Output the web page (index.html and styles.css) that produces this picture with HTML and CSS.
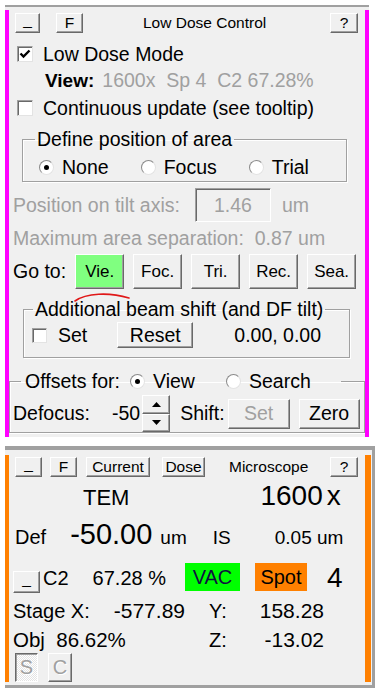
FILE: index.html
```html
<!DOCTYPE html>
<html lang="en">
<head>
    <meta charset="UTF-8">
    <title>Low Dose Control</title>
    <link rel="stylesheet" href="styles.css">
</head>
<body>
    <div class="dlg dlg-low">
        <div class="dlg-in">
            <div class="titlebar">
                <button class="btn tb-min">_</button>
                <button class="btn tb-f">F</button>
                <span class="tb-title">Low Dose Control</span>
                <button class="btn tb-help">?</button>
            </div>

            <div class="row row-mode">
                <span class="check"><svg width="14" height="14" viewBox="0 0 14 14"><path d="M2.5 6.5 L5.5 9.5 L11.5 3.5" fill="none" stroke="#000" stroke-width="2.4"/></svg></span>
                <span class="lbl">Low Dose Mode</span>
            </div>
            <div class="row row-view">
                <b class="view-lbl">View:</b>
                <span class="dim view-info">1600x&nbsp; Sp 4&nbsp; C2 67.28%</span>
            </div>
            <div class="row row-cont">
                <span class="check"></span>
                <span class="lbl">Continuous update (see tooltip)</span>
            </div>

            <fieldset class="grp grp-def">
                <legend>Define position of area</legend>
                <div class="row radios">
                    <span class="opt"><span class="radio on"></span>None</span>
                    <span class="opt"><span class="radio"></span>Focus</span>
                    <span class="opt"><span class="radio"></span>Trial</span>
                </div>
            </fieldset>

            <div class="row row-tilt dim">
                <span>Position on tilt axis:</span>
                <span class="edit">1.46</span>
                <span class="unit">um</span>
            </div>
            <div class="row row-sep dim">Maximum area separation:&nbsp; 0.87 um</div>

            <div class="row row-goto">
                <span>Go to:</span>
                <button class="btn go go-view">Vie.</button>
                <button class="btn go">Foc.</button>
                <button class="btn go">Tri.</button>
                <button class="btn go">Rec.</button>
                <button class="btn go">Sea.</button>
                <svg class="scribble" width="60" height="14" viewBox="0 0 60 14"><path d="M1 10 C 12 2, 35 1, 55 7" fill="none" stroke="#e01818" stroke-width="1.6" stroke-linecap="round"/></svg>
            </div>

            <fieldset class="grp grp-shift">
                <legend>Additional beam shift (and DF tilt)</legend>
                <div class="row shift-row">
                    <span class="check small"></span>
                    <span class="set-lbl">Set</span>
                    <button class="btn reset">Reset</button>
                    <span class="shift-val">0.00, 0.00</span>
                </div>
            </fieldset>

            <fieldset class="grp grp-off">
                <legend>
                    <span>Offsets for:</span>
                    <span class="opt opt-view"><span class="radio on"></span>View</span>
                    <span class="opt opt-search"><span class="radio"></span>Search</span>
                </legend>
                <div class="row defocus-row">
                    <span>Defocus:</span>
                    <span class="defocus-val">-50</span>
                    <span class="spin">
                        <span class="spin-btn"><svg width="9" height="5" viewBox="0 0 9 5"><path d="M0 5 L4.5 0 L9 5z"/></svg></span>
                        <span class="spin-btn"><svg width="9" height="5" viewBox="0 0 9 5"><path d="M0 0 L4.5 5 L9 0z"/></svg></span>
                    </span>
                    <span class="shift-lbl">Shift:</span>
                    <button class="btn off-set" disabled>Set</button>
                    <button class="btn off-zero">Zero</button>
                </div>
            </fieldset>
        </div>
    </div>

    <div class="dlg dlg-mic">
        <div class="dlg-in">
            <div class="titlebar">
                <button class="btn tb-min">_</button>
                <button class="btn tb-f2">F</button>
                <button class="btn tb-current">Current</button>
                <button class="btn tb-dose">Dose</button>
                <span class="tb-title2">Microscope</span>
                <button class="btn tb-help">?</button>
            </div>

            <div class="row mag-row">
                <span class="mode">TEM</span>
                <span class="mag">1600</span><span class="mag-x">x</span>
            </div>
            <div class="row def-row">
                <span class="def-lbl">Def</span>
                <span class="def-val">-50.00</span>
                <span class="def-unit">um</span>
                <span class="is-lbl">IS</span>
                <span class="is-val">0.05 um</span>
            </div>
            <div class="row c2-row">
                <button class="btn c2-min">_</button>
                <span class="c2-lbl">C2</span>
                <span class="c2-val">67.28 %</span>
                <span class="tag vac">VAC</span>
                <span class="tag spot">Spot</span>
                <span class="spot-val">4</span>
            </div>
            <div class="row stage-row">
                <span class="col-a">Stage X:</span>
                <span class="col-b">-577.89</span>
                <span class="col-c">Y:</span>
                <span class="col-d">158.28</span>
            </div>
            <div class="row stage-row obj-row">
                <span class="col-a">Obj&nbsp; 86.62%</span>
                <span class="col-b"></span>
                <span class="col-c">Z:</span>
                <span class="col-d">-13.02</span>
            </div>
            <div class="row sc-row">
                <span class="tog tog-on">S</span>
                <span class="tog">C</span>
            </div>
        </div>
    </div>
</body>
</html>
```

FILE: styles.css
```css
body {
    margin: 0;
    background: #fff;
    font-family: "Liberation Sans", Arial, sans-serif;
    font-size: 19.5px;
    color: #000;
}
.dlg {
    background: #f0f0f0;
    box-sizing: border-box;
}
.dlg-low {
    margin: 5px 0 0 5px;
    width: 364px;
    border-top: 2px solid #a0a0a0;
    padding-top: 3px;
}
.dlg-low .dlg-in {
    height: 427px;
    border-left: 4px solid #ff00ff;
    border-right: 4px solid #ff00ff;
    overflow: hidden;
}
.dlg-mic {
    margin: 9px 0 0 5px;
    width: 370px;
    border-top: 4px solid #a0a0a0;
    border-right: 3px solid #a0a0a0;
    border-bottom: 3px solid #a0a0a0;
    padding: 5px 1px 3px 0;
}
.dlg-mic .dlg-in {
    height: 227px;
    border-left: 4px solid #ff8000;
    border-right: 6px solid #ff8000;
    overflow: hidden;
}
.row {
    display: flex;
    align-items: center;
}
.dim {
    color: #a0a0a0;
}

/* buttons */
.btn {
    font-family: inherit;
    font-size: 15.5px;
    color: #000;
    background: #f0f0f0;
    border: 1px solid;
    border-color: #fff #696969 #696969 #fff;
    box-shadow: inset -1px -1px #a0a0a0;
    box-sizing: border-box;
    padding: 0;
    display: flex;
    align-items: center;
    justify-content: center;
}
.btn:disabled {
    color: #a0a0a0;
}

.titlebar {
    display: flex;
    align-items: center;
    height: 20px;
    font-size: 15.5px;
}
.titlebar .btn {
    height: 20px;
}
.dlg-low .titlebar {
    margin-top: 3px;
}
.dlg-mic .titlebar {
    margin-top: 2px;
}
.tb-min {
    width: 25px;
    margin-left: 6px;
    padding-bottom: 7px !important;
}
.tb-f {
    width: 27px;
    margin-left: 16px;
}
.tb-title {
    margin-left: 60px;
}
.tb-help {
    width: 28px;
    margin-left: auto;
    margin-right: 7px;
}
.dlg-mic .tb-min {
    width: 27px;
}
.tb-f2 {
    width: 27px;
    margin-left: 8px;
}
.tb-current {
    width: 64px;
    margin-left: 9px;
}
.tb-dose {
    width: 43px;
    margin-left: 12px;
}
.tb-title2 {
    margin-left: 24px;
}

/* check boxes and radios */
.check {
    width: 16px;
    height: 16px;
    box-sizing: border-box;
    background: #fff;
    border: 1px solid;
    border-color: #a0a0a0 #e3e3e3 #e3e3e3 #a0a0a0;
    box-shadow: inset 1px 1px #696969;
    display: flex;
    align-items: center;
    justify-content: center;
    flex-shrink: 0;
}
.check svg {
    display: block;
}
.radio {
    width: 15px;
    height: 15px;
    box-sizing: border-box;
    border-radius: 50%;
    background: #fff;
    border: 1px solid;
    border-color: #8a8a8a #e3e3e3 #e3e3e3 #8a8a8a;
    display: inline-flex;
    align-items: center;
    justify-content: center;
    margin-right: 8px;
    flex-shrink: 0;
}
.radio.on::after {
    content: "";
    width: 5px;
    height: 5px;
    border-radius: 50%;
    background: #000;
}
.opt {
    display: inline-flex;
    align-items: center;
}

.row-mode {
    height: 26px;
    margin-top: 8px;
}
.row-mode .check,
.row-cont .check {
    margin-left: 8px;
}
.lbl {
    margin-left: 10px;
}
.row-view {
    height: 27px;
    padding-left: 36px;
}
.view-lbl {
    font-size: 19px;
}
.view-info {
    margin-left: 8px;
}
.row-cont {
    height: 28px;
}

/* group boxes */
.grp {
    margin: 0;
    padding: 0;
    min-width: 0;
    box-sizing: border-box;
    border: 1px solid #a0a0a0;
    box-shadow: inset 1px 1px #fff, 1px 1px #fff;
}
.grp legend {
    padding: 0 2px;
    line-height: 22px;
}
.grp-def {
    margin: 6px 0 0 13px;
    width: 325px;
}
.grp-def legend {
    margin-left: 12px;
}
.radios {
    height: 27px;
    margin-top: 4px;
    padding-left: 16px;
}
.radios .opt + .opt {
    margin-left: 32px;
}

.row-tilt {
    height: 34px;
    margin-top: 6px;
    padding-left: 4px;
}
.edit {
    width: 76px;
    height: 34px;
    box-sizing: border-box;
    margin-left: 15px;
    border: 1px solid;
    border-color: #a0a0a0 #fff #fff #a0a0a0;
    box-shadow: inset 1px 1px #696969;
    display: flex;
    align-items: center;
    justify-content: center;
}
.unit {
    margin-left: 11px;
}
.row-sep {
    height: 20px;
    margin-top: 6px;
    padding-left: 4px;
}

.row-goto {
    position: relative;
    height: 35px;
    margin-top: 6px;
    padding-left: 4px;
}
.go {
    width: 49px;
    height: 35px;
    font-size: 17px;
    margin-left: 9px;
}
.go-view {
    background: #80ff80;
}
.scribble {
    position: absolute;
    left: 65px;
    top: 37px;
}

.grp-shift {
    margin: 9px 0 0 14px;
    width: 327px;
}
.grp-shift legend {
    margin-left: 9px;
}
.shift-row {
    height: 26px;
    margin: 2px 0 9px;
}
.check.small {
    width: 15px;
    height: 15px;
    margin-left: 8px;
}
.set-lbl {
    margin-left: 11px;
}
.reset {
    width: 76px;
    height: 26px;
    font-size: 19.5px;
    margin-left: 30px;
}
.shift-val {
    margin-left: 41px;
}

.grp-off {
    margin: 12px 0 0;
    width: 356px;
}
.grp-off legend {
    margin-left: 11px;
    padding: 0 30px 0 4px;
    display: flex;
    align-items: center;
}
.opt-view {
    margin-left: 10px;
}
.opt-search {
    margin-left: 31px;
}
.defocus-row {
    height: 37px;
    margin-top: 3px;
    padding-left: 3px;
}
.defocus-val {
    margin-left: 22px;
}
.spin {
    margin-left: 2px;
    width: 28px;
    height: 37px;
    display: flex;
    flex-direction: column;
}
.spin-btn {
    flex: 1;
    background: #f0f0f0;
    border: 1px solid;
    border-color: #fff #696969 #696969 #fff;
    box-shadow: inset -1px -1px #a0a0a0;
    display: flex;
    align-items: center;
    justify-content: center;
}
.spin-btn svg {
    display: block;
}
.shift-lbl {
    margin-left: 10px;
}
.off-set {
    width: 62px;
    height: 30px;
    font-size: 19.5px;
    margin-left: 3px;
}
.off-zero {
    width: 61px;
    height: 30px;
    font-size: 19.5px;
    margin-left: 9px;
}

/* microscope panel */
.mag-row {
    height: 32px;
    margin-top: 3px;
    align-items: baseline;
    line-height: 32px;
}
.mode {
    font-size: 22px;
    margin-left: 74px;
}
.mag {
    font-size: 28px;
    margin-left: 131px;
}
.mag-x {
    font-size: 28px;
    margin-left: 4px;
}
.def-row {
    height: 32px;
    margin-top: 6px;
    align-items: baseline;
    line-height: 32px;
    font-size: 19px;
}
.def-lbl {
    margin-left: 6px;
    font-size: 20px;
}
.def-val {
    font-size: 29px;
    margin-left: 24px;
}
.def-unit {
    margin-left: 8px;
}
.is-lbl {
    margin-left: 26px;
}
.is-val {
    margin-left: 44px;
}
.c2-row {
    height: 30px;
    margin-top: 13px;
    font-size: 20px;
}
.c2-min {
    width: 27px;
    height: 22px;
    margin-left: 4px;
    align-self: flex-end;
    padding-bottom: 7px;
}
.c2-lbl {
    margin-left: 3px;
}
.c2-val {
    margin-left: 24px;
}
.tag {
    height: 28px;
    align-self: flex-start;
    display: flex;
    align-items: center;
    justify-content: center;
}
.vac {
    width: 55px;
    margin-left: 19px;
    background: #00ff00;
    color: #101040;
}
.spot {
    width: 52px;
    margin-left: 15px;
    background: #ff8000;
}
.spot-val {
    font-size: 28px;
    margin-left: 20px;
}
.stage-row {
    height: 22px;
    margin-top: 7px;
    font-size: 20px;
}
.col-a {
    width: 87px;
    margin-left: 4px;
    white-space: nowrap;
}
.col-b {
    width: 85px;
    text-align: right;
    font-size: 21px;
}
.col-c {
    width: 40px;
    margin-left: 24px;
}
.col-d {
    width: 75px;
    text-align: right;
    font-size: 21px;
}
.obj-row .col-a {
    font-size: 20.5px;
}
.sc-row {
    height: 29px;
    margin-top: 2px;
}
.tog {
    height: 29px;
    box-sizing: border-box;
    font-size: 20px;
    color: #a0a0a0;
    text-shadow: 1px 1px #fff;
    border: 1px solid;
    border-color: #fff #696969 #696969 #fff;
    box-shadow: inset -1px -1px #a0a0a0;
    display: flex;
    align-items: center;
    justify-content: center;
    width: 24px;
    margin-left: 10px;
}
.tog-on {
    width: 23px;
    margin-left: 6px;
    border-color: #696969 #fff #fff #696969;
    box-shadow: inset 1px 1px #a0a0a0;
    background: repeating-conic-gradient(#fff 0 25%, #e4e4e4 0 50%) 0 0 / 2px 2px;
}
```
